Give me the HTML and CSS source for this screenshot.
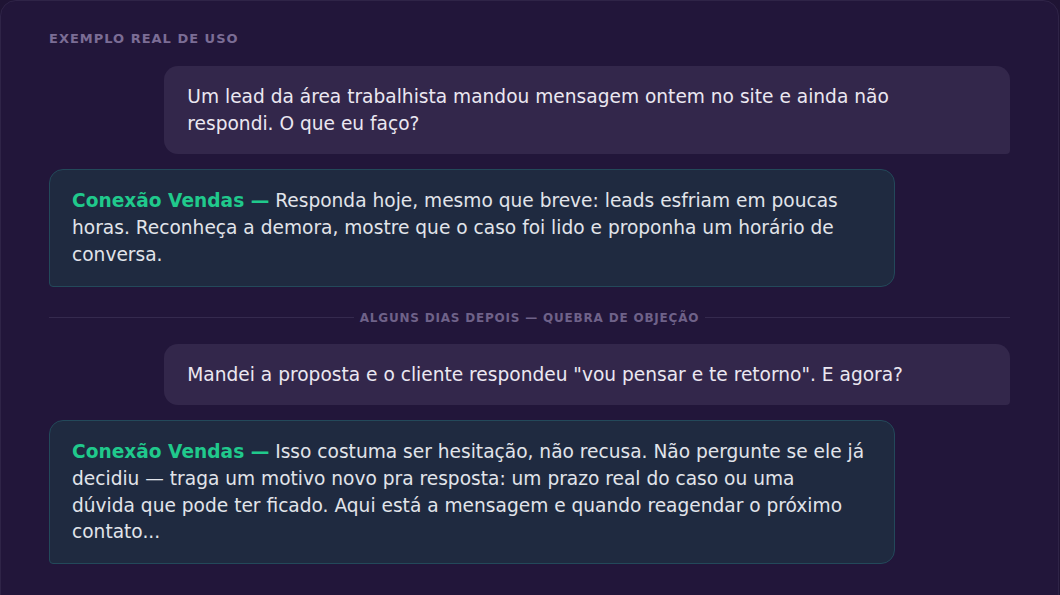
FILE: index.html
```html
<!DOCTYPE html>
<html lang="pt-BR">
<head>
<meta charset="utf-8">
<title>Exemplo real de uso</title>
<link rel="stylesheet" href="styles.css">
</head>
<body>
<section class="card">
  <div class="label">Exemplo real de uso</div>
  <div class="chat">
    <div class="msg user">Um lead da área trabalhista mandou mensagem ontem no site e ainda não<br>respondi. O que eu faço?</div>
    <div class="msg bot"><strong class="who">Conexão Vendas —</strong> Responda hoje, mesmo que breve: leads esfriam em poucas<br>horas. Reconheça a demora, mostre que o caso foi lido e proponha um horário de<br>conversa.</div>
    <div class="divider"><span>Alguns dias depois — quebra de objeção</span></div>
    <div class="msg user">Mandei a proposta e o cliente respondeu "vou pensar e te retorno". E agora?</div>
    <div class="msg bot"><strong class="who">Conexão Vendas —</strong> Isso costuma ser hesitação, não recusa. Não pergunte se ele já<br>decidiu — traga um motivo novo pra resposta: um prazo real do caso ou uma<br>dúvida que pode ter ficado. Aqui está a mensagem e quando reagendar o próximo<br>contato...</div>
  </div>
</section>
</body>
</html>
```

FILE: styles.css
```css
* { box-sizing: border-box; }
html, body { margin: 0; padding: 0; }
body {
  background: #1f1434;
  font-family: "DejaVu Sans", "Noto Sans", sans-serif;
  color: #e9e5f0;
  width: 1060px;
  height: 595px;
  overflow: hidden;
}
.card {
  width: 1059px;
  min-height: 640px;
  background: #22163a;
  border: 1px solid #2f2447;
  border-radius: 16px;
  padding: 28px 48px 48px;
}
.label {
  font-size: 13px;
  line-height: 20px;
  font-weight: 700;
  letter-spacing: 1px;
  text-transform: uppercase;
  color: #7b6d95;
  margin-bottom: 17px;
}
.chat {
  display: flex;
  flex-direction: column;
  gap: 15px;
}
.msg {
  max-width: 88%;
  width: 846px;
  padding: 18px 16px 17px 22px;
  font-size: 18.6px;
  line-height: 26.7px;
}
.user {
  align-self: flex-end;
  padding: 18px 16px 17px 23px;
  background: #33274b;
  border-radius: 14px 14px 4px 14px;
  color: #ebe7f1;
}
.bot {
  align-self: flex-start;
  background: #1f2a40;
  border: 1px solid #23495a;
  border-radius: 14px 14px 14px 4px;
  color: #e1e4ea;
}
.who {
  color: #20c98c;
  font-weight: 700;
}
.divider {
  display: flex;
  align-items: center;
  gap: 6px;
  margin: 9px 0 4px;
  font-size: 12px;
  line-height: 14px;
  font-weight: 700;
  letter-spacing: 0.8px;
  text-transform: uppercase;
  color: #6f6289;
}
.divider::before,
.divider::after {
  content: "";
  flex: 1;
  height: 1px;
  background: #352a4e;
}
```
